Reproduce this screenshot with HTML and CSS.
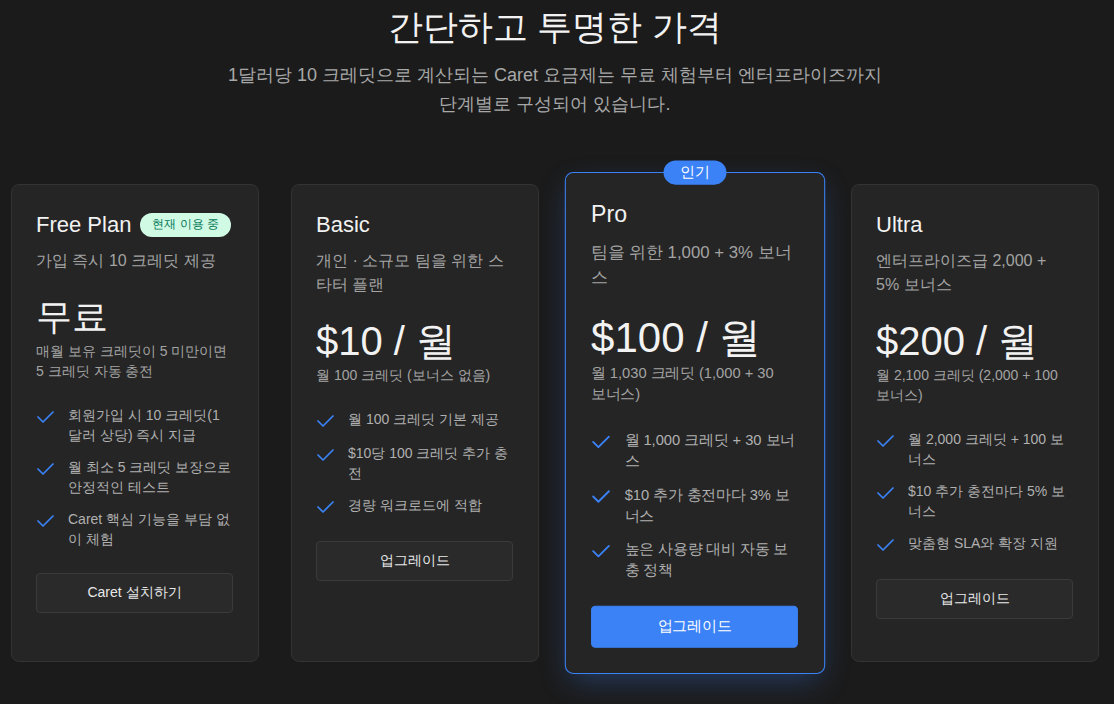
FILE: index.html
```html
<!DOCTYPE html>
<html lang="ko">
<head>
<meta charset="utf-8">
<title>간단하고 투명한 가격</title>
<link rel="stylesheet" href="styles.css">
</head>
<body>
<main class="page">
  <header class="intro">
    <h1 class="intro-title">간단하고 투명한 가격</h1>
    <p class="intro-text">1달러당 10 크레딧으로 계산되는 Caret 요금제는 무료 체험부터 엔터프라이즈까지 단계별로 구성되어 있습니다.</p>
  </header>

  <section class="plans">
    <article class="card">
      <div class="card-head">
        <h2 class="card-title">Free Plan</h2>
        <span class="badge-current">현재 이용 중</span>
      </div>
      <p class="card-desc">가입 즉시 10 크레딧 제공</p>
      <div class="price price-free">무료</div>
      <p class="price-note">매월 보유 크레딧이 5 미만이면 5 크레딧 자동 충전</p>
      <ul class="features">
        <li><svg class="check" viewBox="0 0 20 20"><path d="M2 10l5 5 10-10"/></svg><span>회원가입 시 10 크레딧(1달러 상당) 즉시 지급</span></li>
        <li><svg class="check" viewBox="0 0 20 20"><path d="M2 10l5 5 10-10"/></svg><span>월 최소 5 크레딧 보장으로 안정적인 테스트</span></li>
        <li><svg class="check" viewBox="0 0 20 20"><path d="M2 10l5 5 10-10"/></svg><span>Caret 핵심 기능을 부담 없이 체험</span></li>
      </ul>
      <button class="btn">Caret 설치하기</button>
    </article>

    <article class="card">
      <div class="card-head">
        <h2 class="card-title">Basic</h2>
      </div>
      <p class="card-desc">개인 · 소규모 팀을 위한 스타터 플랜</p>
      <div class="price">$10 / 월</div>
      <p class="price-note">월 100 크레딧 (보너스 없음)</p>
      <ul class="features">
        <li><svg class="check" viewBox="0 0 20 20"><path d="M2 10l5 5 10-10"/></svg><span>월 100 크레딧 기본 제공</span></li>
        <li><svg class="check" viewBox="0 0 20 20"><path d="M2 10l5 5 10-10"/></svg><span>$10당 100 크레딧 추가 충전</span></li>
        <li><svg class="check" viewBox="0 0 20 20"><path d="M2 10l5 5 10-10"/></svg><span>경량 워크로드에 적합</span></li>
      </ul>
      <button class="btn">업그레이드</button>
    </article>

    <article class="card card-pro">
      <span class="badge-popular">인기</span>
      <div class="card-head">
        <h2 class="card-title">Pro</h2>
      </div>
      <p class="card-desc">팀을 위한 1,000 + 3% 보너스</p>
      <div class="price">$100 / 월</div>
      <p class="price-note">월 1,030 크레딧 (1,000 + 30 보너스)</p>
      <ul class="features">
        <li><svg class="check" viewBox="0 0 20 20"><path d="M2 10l5 5 10-10"/></svg><span>월 1,000 크레딧 + 30 보너스</span></li>
        <li><svg class="check" viewBox="0 0 20 20"><path d="M2 10l5 5 10-10"/></svg><span>$10 추가 충전마다 3% 보너스</span></li>
        <li><svg class="check" viewBox="0 0 20 20"><path d="M2 10l5 5 10-10"/></svg><span>높은 사용량 대비 자동 보충 정책</span></li>
      </ul>
      <button class="btn btn-primary">업그레이드</button>
    </article>

    <article class="card">
      <div class="card-head">
        <h2 class="card-title">Ultra</h2>
      </div>
      <p class="card-desc">엔터프라이즈급 2,000 + 5% 보너스</p>
      <div class="price">$200 / 월</div>
      <p class="price-note">월 2,100 크레딧 (2,000 + 100 보너스)</p>
      <ul class="features">
        <li><svg class="check" viewBox="0 0 20 20"><path d="M2 10l5 5 10-10"/></svg><span>월 2,000 크레딧 + 100 보너스</span></li>
        <li><svg class="check" viewBox="0 0 20 20"><path d="M2 10l5 5 10-10"/></svg><span>$10 추가 충전마다 5% 보너스</span></li>
        <li><svg class="check" viewBox="0 0 20 20"><path d="M2 10l5 5 10-10"/></svg><span>맞춤형 SLA와 확장 지원</span></li>
      </ul>
      <button class="btn">업그레이드</button>
    </article>
  </section>
</main>
</body>
</html>
```

FILE: styles.css
```css
* { box-sizing: border-box; }

html, body {
  margin: 0;
  padding: 0;
  background: #1b1b1b;
}

body {
  font-family: "Liberation Sans", sans-serif;
  color: #ededed;
  height: 704px;
  overflow: hidden;
}

.page {
  width: 1088px;
  margin-left: 11px;
  padding-top: 3px;
}

.intro {
  text-align: center;
}

.intro-title {
  margin: 0;
  font-size: 35px;
  line-height: 48px;
  font-weight: 400;
  color: #f2f2f2;
}

.intro-text {
  margin: 10px auto 0;
  max-width: 672px;
  font-size: 18px;
  line-height: 28.8px;
  color: #a8a8a8;
}

.plans {
  margin-top: 65px;
  display: grid;
  grid-template-columns: repeat(4, 248px);
  column-gap: 32px;
  align-items: stretch;
}

.card {
  position: relative;
  display: flex;
  flex-direction: column;
  background: #252525;
  border: 1px solid #333333;
  border-radius: 8px;
  padding: 28px 25px 24px 24px;
}

.card-pro {
  transform: scale(1.05);
  border-color: #3b82f6;
  box-shadow: 0 10px 28px -6px rgba(59, 130, 246, 0.35);
}

.badge-popular {
  position: absolute;
  top: -12px;
  left: 50%;
  transform: translateX(-50%);
  height: 23px;
  padding: 0 16px;
  border-radius: 999px;
  background: #3b82f6;
  color: #ffffff;
  font-size: 14px;
  line-height: 23px;
  white-space: nowrap;
}

.card-head {
  display: flex;
  align-items: center;
  gap: 9px;
  height: 24px;
}

.card-title {
  margin: 0;
  font-size: 22px;
  line-height: 24px;
  font-weight: 400;
  color: #f2f2f2;
}

.badge-current {
  display: inline-flex;
  align-items: center;
  height: 24px;
  padding: 0 12px;
  border-radius: 999px;
  background: #d1fae5;
  color: #047857;
  font-size: 12px;
  white-space: nowrap;
}

.card-desc {
  margin: 12px 0 0;
  font-size: 16px;
  line-height: 24px;
  color: #a3a3a3;
}

.price {
  margin-top: 20px;
  font-size: 40px;
  line-height: 48px;
  color: #f2f2f2;
}

.price-free {
  font-size: 36px;
}

.price-note {
  margin: 0;
  font-size: 14px;
  line-height: 20px;
  color: #a3a3a3;
  word-break: keep-all;
}

.features {
  list-style: none;
  margin: 24px 0 0;
  padding: 0;
  display: flex;
  flex-direction: column;
  gap: 12px;
}

.features li {
  display: flex;
  align-items: flex-start;
  gap: 12px;
  font-size: 14px;
  line-height: 20px;
  color: #b0b0b0;
}

.check {
  flex: none;
  width: 20px;
  height: 20px;
  margin-top: 2px;
  fill: none;
  stroke: #3b82f6;
  stroke-width: 1.75;
  stroke-linecap: round;
  stroke-linejoin: round;
}

.btn {
  margin-top: 24px;
  height: 40px;
  width: 100%;
  border: 1px solid #3a3a3a;
  border-radius: 4px;
  background: #2a2a2a;
  color: #e8e8e8;
  font-family: inherit;
  font-size: 14px;
}

.btn-primary {
  background: #3b82f6;
  border-color: #3b82f6;
  color: #ffffff;
}
```
